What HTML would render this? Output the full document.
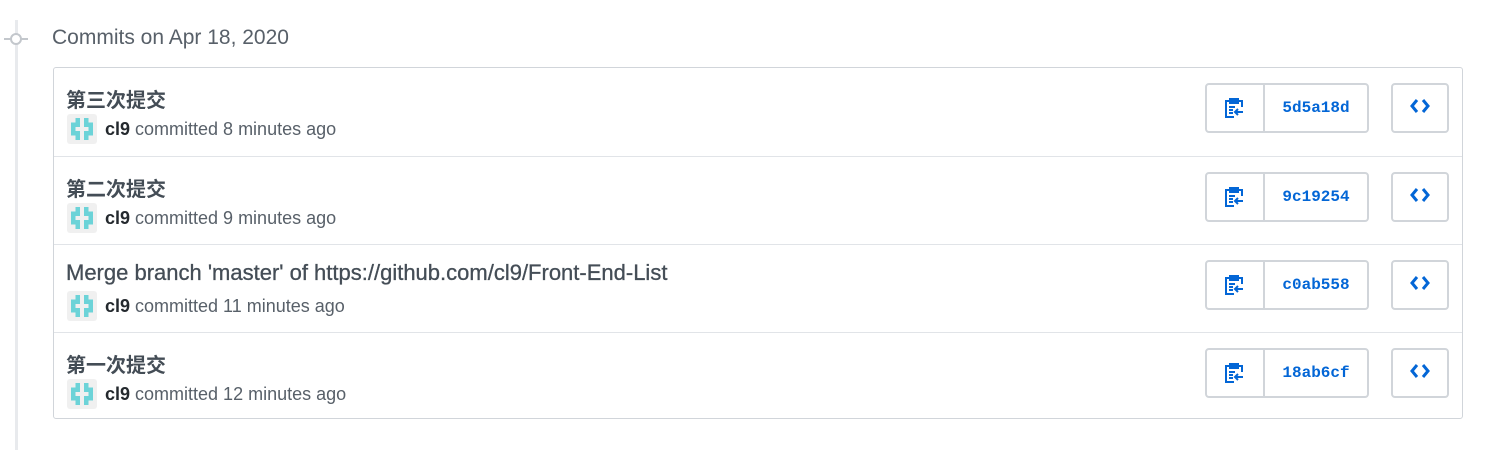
<!DOCTYPE html>
<html><head><meta charset="utf-8"><style>
body{margin:0;width:1492px;height:442px;background:#fff;font-family:"Liberation Sans","Noto Sans CJK SC",sans-serif;position:relative;overflow:hidden}
.line{position:absolute;left:15px;top:20px;width:3px;height:430px;background:#e8eaed}
.dot{position:absolute;left:10px;top:33px;width:8px;height:8px;border:2px solid #c3c7cc;border-radius:50%;background:#fff}
.dotl{position:absolute;left:4px;top:38px;width:24px;height:2px;background:#c3c7cc}
.hdr{position:absolute;left:52px;top:26px;font-size:21px;color:#586069}
.box{position:absolute;left:53px;top:67px;width:1408px;height:350px;border:1px solid #d1d5da;border-radius:3px}
.row{position:absolute;left:0;width:1408px;height:88px;border-top:1px solid #e1e4e8}
.row:first-child{border-top:none}
.t{position:absolute;left:12px;top:16px;font-size:20px;font-weight:bold;color:#444d56}
.t.n{font-weight:normal;font-size:22px;top:15px;color:#444d56;-webkit-text-stroke:0.3px #444d56}
.av{position:absolute;left:13px;top:46px;width:30px;height:30px;background:#f0f0f0;border-radius:3px}
.m{position:absolute;left:51px;top:51px;font-size:18px;color:#586069}
.m b{color:#24292e}
.grp{position:absolute;left:1151px;top:15px;width:160px;height:46px;border:2px solid #d1d5da;border-radius:4px}
.grp .d{position:absolute;left:56px;top:0;width:2px;height:46px;background:#d1d5da}
.sha{position:absolute;left:58px;top:0;width:102px;line-height:46px;text-align:center;font-family:"Liberation Mono",monospace;font-weight:bold;font-size:16px;color:#0366d6}
.cb{position:absolute;left:1337px;top:15px;width:54px;height:46px;border:2px solid #d1d5da;border-radius:4px}
svg{position:absolute}
</style></head><body>
<div class="line"></div><div class="dotl"></div><div class="dot"></div>
<div class="hdr">Commits on Apr 18, 2020</div>
<div class="box">
<div class="row" style="top:0"><div class="t">第三次提交</div><div class="av"></div><div class="m"><b>cl9</b> committed 8 minutes ago</div></div>
<div class="row" style="top:88px"><div class="t">第二次提交</div><div class="av"></div><div class="m"><b>cl9</b> committed 9 minutes ago</div></div>
<div class="row" style="top:176px"><div class="t n">Merge branch 'master' of https://github.com/cl9/Front-End-List</div><div class="av"></div><div class="m"><b>cl9</b> committed 11 minutes ago</div></div>
<div class="row" style="top:264px"><div class="t">第一次提交</div><div class="av"></div><div class="m"><b>cl9</b> committed 12 minutes ago</div></div>
</div>
<script>
var shas=["5d5a18d","9c19254","c0ab558","18ab6cf"];
document.querySelectorAll('.row').forEach(function(r,i){
 r.insertAdjacentHTML('beforeend','<div class="grp"><svg style="left:16px;top:12px" width="22" height="22" viewBox="0 0 22 22" fill="none" stroke="#0366d6" stroke-width="2"><path d="M7 4H3v16h8M15 4h4v6"/><rect x="7" y="2" width="8" height="4" fill="#0366d6"/><path d="M6 10h6M6 13h4M6 16h4M20 15h-8M15 12l-3 3 3 3"/></svg><div class="d"></div><div class="sha">'+shas[i]+'</div></div><div class="cb"><svg style="left:17px;top:13px" width="20" height="16" viewBox="0 0 20 16" fill="none" stroke="#0366d6" stroke-width="3"><path d="M7 2L2 8l5 6M13 2l5 6-5 6"/></svg></div>');
 var av=r.querySelector('.av');var s='<svg style="left:4px;top:4px" width="22" height="22" viewBox="0 0 5 5" shape-rendering="crispEdges" fill="#6cd3d8">';
 [[1,0],[3,0],[0,1],[1,1],[3,1],[4,1],[0,2],[4,2],[0,3],[1,3],[3,3],[4,3],[1,4],[3,4]].forEach(function(c){s+='<rect x="'+c[0]+'" y="'+c[1]+'" width="1" height="1"/>'});
 av.innerHTML=s+'</svg>';
});
</script>
</body></html>
